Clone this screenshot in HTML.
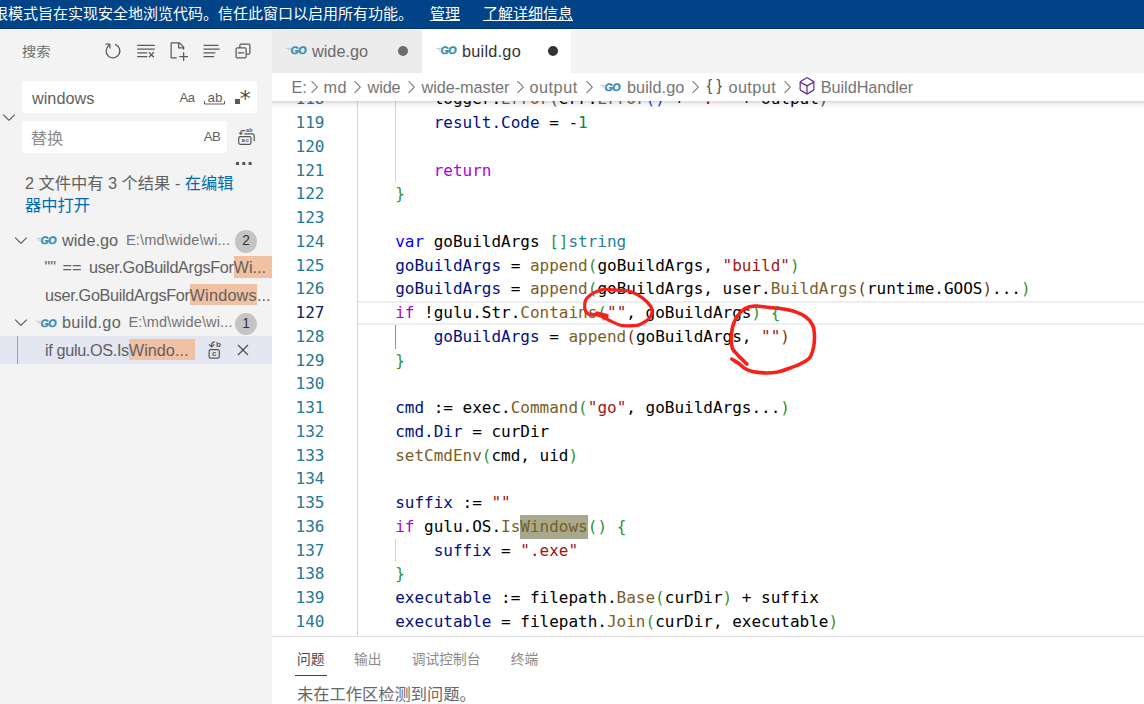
<!DOCTYPE html>
<html lang="zh-CN">
<head>
<meta charset="utf-8">
<title>build.go - Visual Studio Code</title>
<style>
html,body{margin:0;padding:0;}
body{width:1144px;height:704px;overflow:hidden;position:relative;background:#fff;
  font-family:"Liberation Sans","Noto Sans CJK SC",sans-serif;font-size:16.25px;color:#616161;}
.abs{position:absolute;}
svg{display:block;overflow:visible;}
#banner{left:0;top:0;width:1144px;height:29px;box-sizing:border-box;border-bottom:1.3px solid #003479;z-index:6;box-shadow:0 1px 0 rgba(255,255,255,.75);background:#004386;color:#fff;white-space:nowrap;overflow:hidden;}
#banner span{position:absolute;top:0;line-height:28.4px;font-size:15px;}
#banner .u{text-decoration:underline;}
#sidebar{left:0;top:29px;width:272px;height:675px;background:#f3f3f3;overflow:hidden;}
#sidebar .title{left:21.5px;top:11.5px;font-size:13.75px;line-height:22px;color:#6f6f6f;transform:scale(1.04,0.92);transform-origin:0 80%;}
.ibox{background:#fff;border-radius:3px;height:32px;}
.ibox .tx{position:absolute;left:10px;top:0;line-height:34.5px;font-size:16.25px;}
.row{position:absolute;left:0;width:272px;height:27.5px;line-height:27.5px;white-space:nowrap;font-size:16.25px;color:#616161;}
.row .lbl{position:absolute;top:0;line-height:29.5px;}
.row .desc{position:absolute;top:0;line-height:29.5px;font-size:14.6px;color:#747474;}
.badge{position:absolute;left:235px;top:4.5px;width:22px;height:22.5px;border-radius:11.25px;background:#c4c4c4;color:#333;font-size:13.75px;line-height:22px;text-align:center;}
.m{background:#f0c1a2;display:inline-block;vertical-align:top;margin-top:3.1px;height:21.6px;line-height:23.3px;}
#tabs{left:272px;top:29px;width:872px;height:44px;background:#f3f3f3;}
.tab{position:absolute;top:0;height:44px;width:149.5px;box-sizing:border-box;font-size:16.25px;line-height:44px;color:#333;}
.tab.inactive{background:#ececec;color:#686868;}
.tab.active{background:#fff;}
.tab .lbl{position:absolute;left:40px;top:0;}
.tab .dot{position:absolute;left:126px;top:17px;width:10px;height:10px;border-radius:5px;background:#333;}
.tab.inactive .dot{background:#6b6b6b;}
#crumbs{left:272px;top:73px;width:872px;height:27.6px;background:#fff;font-size:16.25px;line-height:29.5px;color:#757575;white-space:nowrap;z-index:3;}
#crumbs span{position:absolute;top:0;}
#editor{left:272px;top:100px;width:872px;height:536px;background:#fff;overflow:hidden;}
#panel{left:272px;top:636px;width:872px;height:68px;background:#fff;border-top:1px solid #dcdcdc;box-sizing:border-box;font-size:13.75px;color:#616161;}
#panel span{position:absolute;white-space:nowrap;}
.code{font-family:"DejaVu Sans Mono","Liberation Mono",monospace;font-size:16px;letter-spacing:-0.007px;white-space:pre;}
.ln{position:absolute;left:0;width:52.4px;text-align:right;color:#237893;height:23.75px;line-height:23.75px;}
.ln.cur{color:#0b216f;}
.cl{position:absolute;left:123.2px;height:23.75px;line-height:23.75px;color:#000;}
.k{color:#af00db}.kw{color:#0000ff}.v{color:#001080}.f{color:#795e26}.s{color:#a31515}.n{color:#098658}.t{color:#267f99}
.b1{color:#0431fa}.b2{color:#319331}.b3{color:#7b3814}
.hl{background:#a8a88c;color:#795e26;display:inline-block;height:23.75px;}
.guide{position:absolute;width:1px;background:#d3d3d3;}
</style>
</head>
<body>
<div id="banner" class="abs"><span style="left:-7px">限模式旨在实现安全地浏览代码。信任此窗口以启用所有功能。</span><span class="u" style="left:430px">管理</span><span class="u" style="left:483px">了解详细信息</span></div>

<div id="sidebar" class="abs">
<div class="abs title">搜索</div>
<svg class="abs" style="left:103px;top:12px" width="20" height="20" viewBox="0 0 16 16" fill="#5a5a5a"><path d="M4.681 3H2V2h3.5l.5.5V6H5V4a5 5 0 1 0 4.53-.761l.302-.954A6 6 0 1 1 4.681 3z"/></svg>
<svg class="abs" style="left:135.5px;top:12px" width="20" height="20" viewBox="0 0 16 16" fill="#5a5a5a"><path d="M10 12.6l.7.7 1.6-1.6 1.6 1.6.8-.7L13 11l1.7-1.6-.8-.8-1.6 1.7-1.6-1.7-.7.8 1.6 1.6-1.6 1.6zM1 4h14V3H1v1zm0 3h14V6H1v1zm8 2.5V9H1v1h8v-.5zM9 13v-1H1v1h8z"/></svg>
<svg class="abs" style="left:168px;top:12px" width="20" height="20" viewBox="0 0 16 16" fill="#5a5a5a"><path fill-rule="evenodd" d="M9.5 1.1l3.4 3.5.1.4v2h-1V6H8V2H3v11h4v1H2.5l-.5-.5v-12l.5-.5h6.7l.3.1zM9 2v3h2.9L9 2zm4 14h-1v-3H9v-1h3V9h1v3h3v1h-3v3z"/></svg>
<svg class="abs" style="left:200.5px;top:12px" width="20" height="20" viewBox="0 0 16 16" fill="#5a5a5a"><path d="M2 3h12v1H2zM2 6h13v1H2zM2 9h9.5v1H2zM2 12h8.5v1H2z"/></svg>
<svg class="abs" style="left:233px;top:12px" width="20" height="20" viewBox="0 0 16 16" fill="#5a5a5a"><path d="M9 9H4v1h5V9z"/><path fill-rule="evenodd" d="M5 3l1-1h7l1 1v7l-1 1h-2v2l-1 1H3l-1-1V6l1-1h2V3zm1 2h4l1 1v4h2V3H6v2zm4 1H3v7h7V6z"/></svg>

<svg class="abs" style="left:-0.6px;top:77.8px" width="20" height="20" viewBox="0 0 16 16" fill="#5a5a5a"><path d="M7.976 10.072l4.357-4.357.62.618L8.284 11h-.618L3 6.333l.619-.618 4.357 4.357z"/></svg>

<div class="abs ibox" style="left:22px;top:52px;width:235px"><span class="tx" style="color:#616161">windows</span>
 <span class="abs" style="left:157.5px;top:0;line-height:33.5px;font-size:13px;letter-spacing:-0.4px;color:#616161">Aa</span>
 <span class="abs" style="left:185.5px;top:0;line-height:33px;font-size:13.5px;color:#616161">ab</span>
 <svg class="abs" style="left:182px;top:20px" width="21" height="4" viewBox="0 0 21 4" fill="none" stroke="#616161" stroke-width="1"><path d="M0.5 0v3h20v-3"/></svg>
 <span class="abs" style="left:217.8px;top:6.5px;line-height:22px;font-size:22px;font-family:'DejaVu Sans',sans-serif;color:#4a4a4a">*</span>
 <div class="abs" style="left:212.5px;top:18px;width:5px;height:5px;background:#5a5a5a"></div>
</div>
<div class="abs ibox" style="left:22px;top:92px;width:205px"><span class="tx" style="color:#8c8c8c;left:8.7px">替换</span>
 <span class="abs" style="left:181.8px;top:0;line-height:31.5px;font-size:13.2px;letter-spacing:-0.6px;color:#616161">AB</span>
</div>
<svg class="abs" style="left:236px;top:96px" width="22" height="22" viewBox="0 0 22 22" fill="none" stroke="#555" stroke-width="1.2"><rect x="2.7" y="11.6" width="12.3" height="7.7" rx="1.5"/><path d="M8.3 8.9H16.4A1.8 1.8 0 0 1 18.2 10.7V16.2"/><path d="M9.2 5.65H6.5A1.7 1.7 0 0 0 4.8 7.35V8.2" stroke-width="1.1"/><path d="M2.3 7.7H7.3L4.8 10.1Z" fill="#555" stroke="none"/><text x="10.1" y="6.7" font-size="5.6" font-weight="bold" stroke="none" fill="#555" font-family="Liberation Sans, sans-serif">ab</text><text x="5.6" y="17.3" font-size="6.2" font-weight="bold" stroke="none" fill="#555" font-family="Liberation Sans, sans-serif" letter-spacing="0.4">ac</text></svg>
<div class="abs" style="left:236.45px;top:132.5px;width:2.5px;height:3px;background:#555;box-shadow:6.3px 0 0 #555,12.6px 0 0 #555"></div>

<div class="abs" style="left:25px;top:143px;width:215px;line-height:22px;font-size:16.25px;color:#616161">2 文件中有 3 个结果 - <span style="color:#006ab1">在编辑器中打开</span></div>

<div class="row" style="top:196.5px">
 <svg class="abs" style="left:11px;top:4.1px" width="20" height="20" viewBox="0 0 16 16" fill="#5a5a5a"><path d="M7.976 10.072l4.357-4.357.62.618L8.284 11h-.618L3 6.333l.619-.618 4.357 4.357z"/></svg>
 <svg class="abs" style="left:34px;top:5.6px" width="24" height="20" viewBox="0 0 24 20"><path d="M2 7.4h5M4 9h2.6" stroke="#b9c6d0" stroke-width="0.9" fill="none"/><text x="6.4" y="13.4" font-family="Liberation Sans, sans-serif" font-weight="bold" font-size="10.8" letter-spacing="-0.7" fill="#3a8db3" stroke="#3a8db3" stroke-width="0.35" transform="skewX(-6)" style="transform-origin:6px 13px">GO</text></svg>

 <span class="lbl" style="left:62px">wide.go</span><span class="desc" style="left:126px;letter-spacing:0.12px">E:\md\wide\wi...</span><span class="badge">2</span>
</div>
<div class="row" style="top:224px"><span class="lbl" style="left:44.5px">""<span style="margin-left:6.5px">==</span><span style="margin-left:7.5px;letter-spacing:-0.33px">user.GoBuildArgsFor</span><span class="m">Wi...&nbsp;&nbsp;&nbsp;</span></span></div>
<div class="row" style="top:251.5px"><span class="lbl" style="left:45px"><span style="letter-spacing:-0.33px">user.GoBuildArgsFor</span><span class="m" style="letter-spacing:0.2px">Windows</span>...</span></div>
<div class="row" style="top:279px">
 <svg class="abs" style="left:11px;top:4.1px" width="20" height="20" viewBox="0 0 16 16" fill="#5a5a5a"><path d="M7.976 10.072l4.357-4.357.62.618L8.284 11h-.618L3 6.333l.619-.618 4.357 4.357z"/></svg>
 <svg class="abs" style="left:34px;top:5.6px" width="24" height="20" viewBox="0 0 24 20"><path d="M2 7.4h5M4 9h2.6" stroke="#b9c6d0" stroke-width="0.9" fill="none"/><text x="6.4" y="13.4" font-family="Liberation Sans, sans-serif" font-weight="bold" font-size="10.8" letter-spacing="-0.7" fill="#3a8db3" stroke="#3a8db3" stroke-width="0.35" transform="skewX(-6)" style="transform-origin:6px 13px">GO</text></svg>

 <span class="lbl" style="left:62px;letter-spacing:0.25px">build.go</span><span class="desc" style="left:128.5px;letter-spacing:0.12px">E:\md\wide\wi...</span><span class="badge">1</span>
</div>
<div class="row" style="top:306.6px;height:28.2px;background:#e4e6f1">
 <div class="abs" style="left:17px;top:0;width:1px;height:28.2px;background:#a0a0a0"></div>
 <span class="lbl" style="left:45px"><span style="letter-spacing:-0.36px">if gulu.OS.Is</span><span class="m" style="padding-right:2.5px">Windo...&nbsp;</span></span>
 <svg class="abs" style="left:204px;top:3.4px" width="20" height="22" viewBox="0 0 20 22" fill="none" stroke="#555" stroke-width="1.2"><rect x="5.1" y="10.6" width="10.2" height="8.6" rx="1.6"/><path d="M10.8 2.9C8.6 2.9 7.7 4.2 7.7 6V7.6"/><path d="M5.1 5.4L7.7 8L10.4 5.4"/><text x="8" y="17" font-size="8" font-weight="bold" stroke="none" fill="#555" font-family="Liberation Sans, sans-serif">c</text><text x="12" y="8.2" font-size="8" font-weight="bold" stroke="none" fill="#555" font-family="Liberation Sans, sans-serif">b</text></svg>
 <svg class="abs" style="left:233.4px;top:4.45px" width="20" height="20" viewBox="0 0 16 16" fill="#505050"><path d="M8 8.707l3.646 3.647.708-.707L8.707 8l3.647-3.646-.707-.708L8 7.293 4.354 3.646l-.707.708L7.293 8l-3.646 3.646.707.708L8 8.707z"/></svg>
</div>

</div>

<div id="tabs" class="abs">
  <div class="tab inactive" style="left:0"><svg class="abs" style="left:12px;top:12px" width="24" height="20" viewBox="0 0 24 20"><path d="M2 7.4h5M4 9h2.6" stroke="#b9c6d0" stroke-width="0.9" fill="none"/><text x="6.4" y="13.4" font-family="Liberation Sans, sans-serif" font-weight="bold" font-size="10.8" letter-spacing="-0.7" fill="#3a8db3" stroke="#3a8db3" stroke-width="0.35" transform="skewX(-6)" style="transform-origin:6px 13px">GO</text></svg>
<span class="lbl">wide.go</span><span class="dot"></span></div>
  <div class="tab active" style="left:149.5px"><svg class="abs" style="left:12px;top:12px" width="24" height="20" viewBox="0 0 24 20"><path d="M2 7.4h5M4 9h2.6" stroke="#b9c6d0" stroke-width="0.9" fill="none"/><text x="6.4" y="13.4" font-family="Liberation Sans, sans-serif" font-weight="bold" font-size="10.8" letter-spacing="-0.7" fill="#3a8db3" stroke="#3a8db3" stroke-width="0.35" transform="skewX(-6)" style="transform-origin:6px 13px">GO</text></svg>
<span class="lbl" style="left:40.5px;letter-spacing:0.25px">build.go</span><span class="dot"></span></div>
</div>
<div id="crumbs" class="abs">
<svg class="abs" style="left:31.65px;top:4px" width="20" height="20" viewBox="0 0 16 16" fill="#7a7a7a"><path d="M10.072 8.024L5.715 3.667l.618-.62L11 7.716v.618L6.333 13l-.618-.619 4.357-4.357z"/></svg>
<svg class="abs" style="left:75.4px;top:4px" width="20" height="20" viewBox="0 0 16 16" fill="#7a7a7a"><path d="M10.072 8.024L5.715 3.667l.618-.62L11 7.716v.618L6.333 13l-.618-.619 4.357-4.357z"/></svg>
<svg class="abs" style="left:128.9px;top:4px" width="20" height="20" viewBox="0 0 16 16" fill="#7a7a7a"><path d="M10.072 8.024L5.715 3.667l.618-.62L11 7.716v.618L6.333 13l-.618-.619 4.357-4.357z"/></svg>
<svg class="abs" style="left:237.9px;top:4px" width="20" height="20" viewBox="0 0 16 16" fill="#7a7a7a"><path d="M10.072 8.024L5.715 3.667l.618-.62L11 7.716v.618L6.333 13l-.618-.619 4.357-4.357z"/></svg>
<svg class="abs" style="left:307.15px;top:4px" width="20" height="20" viewBox="0 0 16 16" fill="#7a7a7a"><path d="M10.072 8.024L5.715 3.667l.618-.62L11 7.716v.618L6.333 13l-.618-.619 4.357-4.357z"/></svg>
<svg class="abs" style="left:412.9px;top:4px" width="20" height="20" viewBox="0 0 16 16" fill="#7a7a7a"><path d="M10.072 8.024L5.715 3.667l.618-.62L11 7.716v.618L6.333 13l-.618-.619 4.357-4.357z"/></svg>
<svg class="abs" style="left:504.65px;top:4px" width="20" height="20" viewBox="0 0 16 16" fill="#7a7a7a"><path d="M10.072 8.024L5.715 3.667l.618-.62L11 7.716v.618L6.333 13l-.618-.619 4.357-4.357z"/></svg>
<span id="c0" style="left:19.50px;letter-spacing:0px">E:</span>
<span id="c1" style="left:51.50px;letter-spacing:0.5px">md</span>
<span id="c2" style="left:95.50px;letter-spacing:-0.1px">wide</span>
<span id="c3" style="left:149.50px;letter-spacing:-0.05px">wide-master</span>
<span id="c4" style="left:257.50px;letter-spacing:0.5px">output</span>
<span id="c5" style="left:355.00px;letter-spacing:0.05px">build.go</span>
<span id="c6" style="left:456.50px;letter-spacing:0.4px">output</span>
<span id="c7" style="left:548.75px;letter-spacing:-0.05px">BuildHandler</span>
<svg class="abs" style="left:325.8px;top:4.7px" width="24" height="20" viewBox="0 0 24 20"><path d="M2 7.4h5M4 9h2.6" stroke="#b9c6d0" stroke-width="0.9" fill="none"/><text x="6.4" y="13.4" font-family="Liberation Sans, sans-serif" font-weight="bold" font-size="10.8" letter-spacing="-0.7" fill="#3a8db3" stroke="#3a8db3" stroke-width="0.35" transform="skewX(-6)" style="transform-origin:6px 13px">GO</text></svg>
<span style="left:434.8px;top:-2px;font-size:16px;letter-spacing:4.4px;color:#555">{}</span>
<svg class="abs" style="left:525.2px;top:3px" width="20" height="20" viewBox="0 0 16 16" fill="#652d90"><path d="M13.51 4l-5-3h-1l-5 3-.49.86v6l.49.85 5 3h1l5-3 .49-.85v-6L13.51 4zm-6 9.56l-4.5-2.7V5.7l4.5 2.45v5.41zM3.27 4.7l4.74-2.84 4.74 2.84-4.74 2.59L3.27 4.7zm9.74 6.16l-4.5 2.7V8.15l4.5-2.45v5.16z"/></svg>
</div>
<div class="abs" style="left:272px;top:100.6px;width:872px;height:7.5px;z-index:4;background:linear-gradient(to bottom,rgba(0,0,0,0.14),rgba(0,0,0,0.05) 45%,rgba(0,0,0,0))"></div>
<div id="editor" class="abs">
<div class="guide" style="left:85px;top:0;height:536px"></div>
<div class="guide" style="left:123px;top:0;height:82px"></div>
<div class="guide" style="left:123px;top:224.75px;height:23.75px;background:#939393"></div>
<div class="guide" style="left:123px;top:438.5px;height:23.75px"></div>
<div class="abs" style="left:85.5px;top:200.9px;width:787px;height:23.75px;box-sizing:border-box;border-top:2px solid #eee;border-bottom:2px solid #eee"></div>
<div class="ln code" style="top:-12.75px">118</div>
<div class="cl code" style="top:-12.75px">    logger.<span class="f">Error</span><span class="b3">(</span>err.<span class="f">Error</span><span class="b1">()</span> + <span class="s">": "</span> + output<span class="b3">)</span></div>
<div class="ln code" style="top:11.00px">119</div>
<div class="cl code" style="top:11.00px">    <span class="v">result.Code</span> = -<span class="n">1</span></div>
<div class="ln code" style="top:34.75px">120</div>
<div class="ln code" style="top:58.50px">121</div>
<div class="cl code" style="top:58.50px">    <span class="k">return</span></div>
<div class="ln code" style="top:82.25px">122</div>
<div class="cl code" style="top:82.25px"><span class="b2">}</span></div>
<div class="ln code" style="top:106.00px">123</div>
<div class="ln code" style="top:129.75px">124</div>
<div class="cl code" style="top:129.75px"><span class="kw">var</span> goBuildArgs <span class="b2">[]</span><span class="t">string</span></div>
<div class="ln code" style="top:153.50px">125</div>
<div class="cl code" style="top:153.50px"><span class="v">goBuildArgs</span> = <span class="f">append</span><span class="b2">(</span>goBuildArgs, <span class="s">"build"</span><span class="b2">)</span></div>
<div class="ln code" style="top:177.25px">126</div>
<div class="cl code" style="top:177.25px"><span class="v">goBuildArgs</span> = <span class="f">append</span><span class="b2">(</span>goBuildArgs, user.<span class="f">BuildArgs</span><span class="b3">(</span>runtime.GOOS<span class="b3">)</span>...<span class="b2">)</span></div>
<div class="ln code cur" style="top:201.00px">127</div>
<div class="cl code" style="top:201.00px"><span class="k">if</span> !gulu.Str.<span class="f">Contains</span><span class="b2">(</span><span class="s">""</span>, goBuildArgs<span class="b2">)</span> <span class="b2">{</span></div>
<div class="ln code" style="top:224.75px">128</div>
<div class="cl code" style="top:224.75px">    <span class="v">goBuildArgs</span> = <span class="f">append</span><span class="b3">(</span>goBuildArgs, <span class="s">""</span><span class="b3">)</span></div>
<div class="ln code" style="top:248.50px">129</div>
<div class="cl code" style="top:248.50px"><span class="b2">}</span></div>
<div class="ln code" style="top:272.25px">130</div>
<div class="ln code" style="top:296.00px">131</div>
<div class="cl code" style="top:296.00px"><span class="v">cmd</span> := exec.<span class="f">Command</span><span class="b2">(</span><span class="s">"go"</span>, goBuildArgs...<span class="b2">)</span></div>
<div class="ln code" style="top:319.75px">132</div>
<div class="cl code" style="top:319.75px"><span class="v">cmd.Dir</span> = curDir</div>
<div class="ln code" style="top:343.50px">133</div>
<div class="cl code" style="top:343.50px"><span class="f">setCmdEnv</span><span class="b2">(</span>cmd, uid<span class="b2">)</span></div>
<div class="ln code" style="top:367.25px">134</div>
<div class="ln code" style="top:391.00px">135</div>
<div class="cl code" style="top:391.00px"><span class="v">suffix</span> := <span class="s">""</span></div>
<div class="ln code" style="top:414.75px">136</div>
<div class="cl code" style="top:414.75px"><span class="k">if</span> gulu.OS.<span class="f">Is</span><span class="hl">Windows</span><span class="b2">()</span> <span class="b2">{</span></div>
<div class="ln code" style="top:438.50px">137</div>
<div class="cl code" style="top:438.50px">    <span class="v">suffix</span> = <span class="s">".exe"</span></div>
<div class="ln code" style="top:462.25px">138</div>
<div class="cl code" style="top:462.25px"><span class="b2">}</span></div>
<div class="ln code" style="top:486.00px">139</div>
<div class="cl code" style="top:486.00px"><span class="v">executable</span> := filepath.<span class="f">Base</span><span class="b2">(</span>curDir<span class="b2">)</span> + suffix</div>
<div class="ln code" style="top:509.75px">140</div>
<div class="cl code" style="top:509.75px"><span class="v">executable</span> = filepath.<span class="f">Join</span><span class="b2">(</span>curDir, executable<span class="b2">)</span></div>
</div>
<svg class="abs" style="left:0;top:0;z-index:10;pointer-events:none" width="1144" height="704" viewBox="0 0 1144 704" fill="none" stroke="#f6211a" stroke-linecap="round" stroke-linejoin="round"><path stroke-width="3.2" d="M598.3 313.8C597.1 314.0 593.1 315.3 591.0 314.9C588.9 314.5 586.8 313.3 585.7 311.4C584.7 309.5 584.5 305.8 584.7 303.6C584.9 301.4 585.2 300.2 586.8 298.3C588.4 296.5 591.2 294.0 594.1 292.6C597.1 291.1 600.8 289.8 604.6 289.4C608.5 289.0 613.2 290.0 617.2 290.2C621.2 290.5 625.2 290.2 628.7 291.0C632.2 291.8 635.2 293.4 638.2 295.2C641.2 296.9 644.3 299.2 646.6 301.5C648.8 303.7 651.1 306.4 651.8 308.8C652.5 311.3 651.8 314.1 650.8 316.2C649.7 318.3 647.6 319.9 645.5 321.4C643.4 322.9 641.0 324.3 638.2 325.1C635.4 325.8 631.7 325.8 628.7 325.8C625.8 325.8 623.1 326.0 620.4 325.3C617.6 324.6 614.4 322.7 612.0 321.6C609.5 320.5 607.4 319.4 605.7 318.5C603.9 317.6 602.8 316.7 601.5 316.2C600.1 315.6 598.1 315.1 597.5 314.9"/><path stroke-width="4.5" d="M597 313.6L606.5 316"/><path stroke-width="3.6" d="M731.9 359.1C733.0 359.9 736.6 361.9 738.8 363.5C740.9 365.1 742.7 367.1 745.0 368.5C747.3 369.9 749.4 370.9 752.5 371.6C755.6 372.4 759.8 372.8 763.8 372.9C767.7 373.0 772.1 373.0 776.2 372.2C780.4 371.5 784.6 370.0 788.8 368.5C792.9 367.0 797.7 365.4 801.2 363.5C804.8 361.6 807.9 360.2 810.0 357.2C812.1 354.3 813.0 350.0 813.8 346.0C814.5 342.0 814.6 337.0 814.4 333.5C814.2 330.0 813.9 327.5 812.5 324.8C811.1 322.0 809.2 319.4 806.2 317.2C803.3 315.1 799.4 313.1 795.0 311.6C790.6 310.2 784.6 309.2 780.0 308.5C775.4 307.8 771.7 307.7 767.5 307.2C763.3 306.8 758.8 305.8 755.0 306.0C751.2 306.2 747.9 306.8 745.0 308.5C742.1 310.2 739.6 312.9 737.5 316.0C735.4 319.1 733.5 323.3 732.5 327.2C731.5 331.2 731.2 336.2 731.2 339.8C731.2 343.3 731.5 346.0 732.5 348.5C733.5 351.0 735.6 352.7 737.5 354.8C739.4 356.8 742.2 359.4 743.8 361.0C745.3 362.6 746.4 363.6 746.9 364.1"/></svg>
<div id="panel" class="abs">
<span style="left:25px;top:11px;color:#4a4a4a">问题</span>
<span style="left:82px;top:11px;color:#8a8a8a">输出</span>
<span style="left:139.7px;top:11px;color:#8a8a8a">调试控制台</span>
<span style="left:238.8px;top:11px;color:#8a8a8a">终端</span>
<div class="abs" style="left:23px;top:37.5px;width:31.5px;height:1.2px;background:#424242"></div>
<span style="left:25px;top:44px;font-size:16.25px;color:#666">未在工作区检测到问题。</span>
</div>
</body>
</html>
